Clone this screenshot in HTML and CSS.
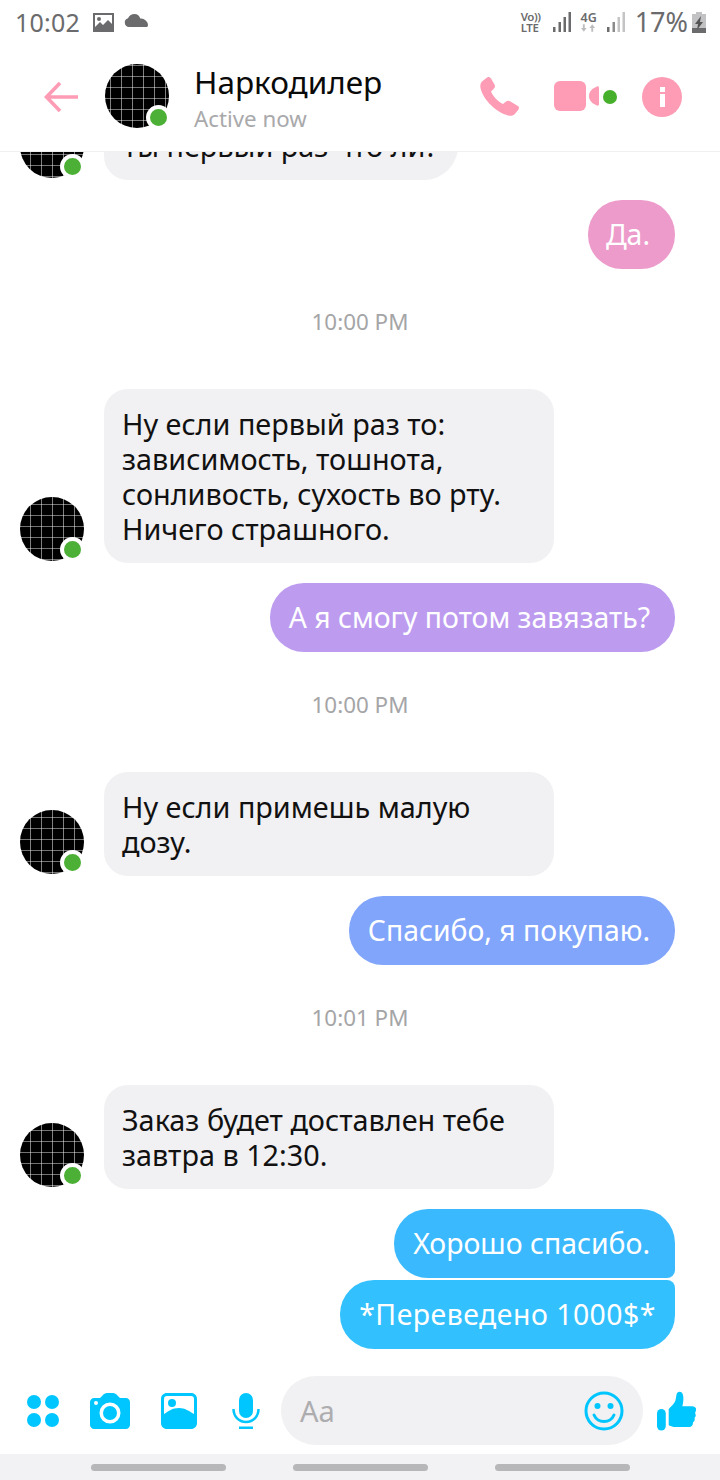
FILE: index.html
```html
<!DOCTYPE html>
<html lang="ru">
<head>
<meta charset="utf-8">
<title>Чат</title>
<link rel="stylesheet" href="styles.css">
</head>
<body>
<div class="phone">
  <header class="top">
    <div class="status">
      <div class="status-side">
        <span class="clock">10:02</span>
        <svg class="st-pic" viewBox="0 0 21 19"><path fill="#6b6b6d" fill-rule="evenodd" d="M0 0h21v19H0zM2 2v12l5-5 3 3 5-5 4 4V2zM6 4a2 2 0 1 1 0 4 2 2 0 0 1 0-4z"/></svg>
        <svg class="st-cloud" viewBox="0 0 24 13"><path fill="#6b6b6d" d="M5 13a4.500 4.500 0 0 1-1-8.800C5 1.500 8 0 10.500 0c3 0 5 2 5.800 4.500 3-.8 7.700 2.500 7.700 6.500 0 1.500-.5 2-2 2z"/></svg>
      </div>
      <div class="status-side right">
        <span class="volte">Vo))<br>LTE</span>
        <svg class="st-bars first" viewBox="0 0 18 20"><g fill="#6b6b6d"><rect x="0" y="15" width="2.500" height="5"/><rect x="5.500" y="10" width="2.500" height="10"/><rect x="10.500" y="5" width="2.500" height="15"/><rect x="15.500" y="0" width="2.500" height="20"/></g></svg>
        <span class="fourg">4G<svg class="st-arrows" viewBox="0 0 16 8"><path fill="#bdbdbf" d="M3 8 0 4h2V0h2v4h2zM12 0l3 4h-2v4h-2V4H9z"/></svg></span>
        <svg class="st-bars" viewBox="0 0 18 20"><rect fill="#6b6b6d" x="0" y="15" width="2.500" height="5"/><rect fill="#8b8b8d" x="5.500" y="10" width="2.500" height="10"/><rect fill="#c4c4c6" x="10.500" y="5" width="2.500" height="15"/><rect fill="#c4c4c6" x="15.500" y="0" width="2.500" height="20"/></svg>
        <span class="pct">17%</span>
        <svg class="st-batt" viewBox="0 0 14 21"><path fill="#c2c2c4" d="M4 0h6v2h4v19H0V2h4z"/><path fill="#6b6b6d" d="M0 16h14v5H0z"/><path fill="#555" d="M9 4 3 12h3l-1 6 6-8H8z"/></svg>
      </div>
    </div>
    <div class="bar">
      <svg class="back" viewBox="0 0 34 32"><path fill="none" stroke="#fd9cb4" stroke-width="3.600" d="M34 16H3M16 2 2.500 16 16 30"/></svg>
      <div class="avatar big"><span class="dot"></span></div>
      <div class="who">
        <div class="name">Наркодилер</div>
        <div class="active">Active now</div>
      </div>
      <div class="actions">
        <svg class="phone-ic" viewBox="0 0 40 39"><path fill="#fd9cb4" d="M2 4.500 7 .5c1.500-1 3-.5 4 1l3.500 6c.8 1.500.6 3-.5 4l-3 3c2 5 7 10 12 12.500l3-2.500c1.200-1 2.800-1.200 4-.3l7.500 4.500c1.600 1 2 2.500.8 4l-3.300 4c-1.500 1.700-3.500 2.500-6 2C17 36 3 23 .5 11 0 8.500.5 6 2 4.500z"/></svg>
        <div class="video">
          <svg class="video-ic" viewBox="0 0 46 31"><rect fill="#fd9cb4" x="0" y="0" width="32" height="30" rx="6"/><path fill="#fd9cb4" d="M45 7v16c0 1.500-1 2-2 1.500-4-1.500-8-4.500-8-9.500s4-8 8-9.500c1-.5 2 0 2 1.500z"/></svg>
          <span class="video-dot"></span>
        </div>
        <div class="info"><span class="info-dot"></span><span class="info-stem"></span></div>
      </div>
    </div>
  </header>

  <main class="feed">
    <div class="row in">
      <div class="avatar"><span class="dot"></span></div>
      <div class="bubble in-b short">Ты первый раз что ли?</div>
    </div>
    <div class="row out gap-s"><div class="bubble sent b-pink">Да.</div></div>
    <div class="stamp">10:00 PM</div>
    <div class="row in">
      <div class="avatar"><span class="dot"></span></div>
      <div class="bubble in-b">Ну если первый раз то:<br>зависимость, тошнота,<br>сонливость, сухость во рту.<br>Ничего страшного.</div>
    </div>
    <div class="row out gap-s"><div class="bubble sent b-violet">А я смогу потом завязать?</div></div>
    <div class="stamp">10:00 PM</div>
    <div class="row in">
      <div class="avatar"><span class="dot"></span></div>
      <div class="bubble in-b">Ну если примешь малую<br>дозу.</div>
    </div>
    <div class="row out gap-s"><div class="bubble sent b-blue">Спасибо, я покупаю.</div></div>
    <div class="stamp">10:01 PM</div>
    <div class="row in">
      <div class="avatar"><span class="dot"></span></div>
      <div class="bubble in-b">Заказ будет доставлен тебе<br>завтра в 12:30.</div>
    </div>
    <div class="row out gap-s"><div class="bubble sent b-sky">Хорошо спасибо.</div></div>
    <div class="row out gap-xs"><div class="bubble sent b-cyan">*Переведено 1000$*</div></div>
  </main>

  <footer class="composer">
    <div class="grid-ic"><i></i><i></i><i></i><i></i></div>
    <svg class="cam" viewBox="0 0 40 36"><path fill="#00c6ff" fill-rule="evenodd" d="M4 5h6l3-3c1-1 2-2 4-2h6c2 0 3 1 4 2l3 3h6c2 0 4 2 4 4v23c0 2-2 4-4 4H4c-2 0-4-2-4-4V9c0-2 2-4 4-4zM20 9.500a10.500 10.500 0 1 0 0 21 10.500 10.500 0 0 0 0-21zM20 13a7 7 0 1 1 0 14 7 7 0 0 1 0-14zM6 8a2 2 0 1 0 0 4 2 2 0 0 0 0-4z"/></svg>
    <svg class="pic" viewBox="0 0 36 36"><path fill="#00c6ff" fill-rule="evenodd" d="M6 0h24c3.500 0 6 2.500 6 6v24c0 3.500-2.500 6-6 6H6c-3.500 0-6-2.500-6-6V6c0-3.500 2.500-6 6-6zM6 3C4 3 3 4 3 6v15c5-3 8-6 15-6 6 0 10 3 15 6V6c0-2-1-3-3-3zM11 6a4 4 0 1 1 0 8 4 4 0 0 1 0-8z"/></svg>
    <svg class="mic" viewBox="0 0 28 36"><rect fill="#00c6ff" x="7" y="0" width="14" height="25" rx="7"/><path fill="none" stroke="#00c6ff" stroke-width="2.500" d="M1.500 16c0 7 5 13 12.500 13s12.500-6 12.500-13M7 34.800h14"/></svg>
    <div class="input">
      <span class="aa">Aa</span>
      <svg class="smile" viewBox="0 0 40 40"><circle cx="20" cy="20" r="18" fill="none" stroke="#00c6ff" stroke-width="3"/><circle cx="13.500" cy="15" r="3" fill="#00c6ff"/><circle cx="26.500" cy="15" r="3" fill="#00c6ff"/><path fill="none" stroke="#00c6ff" stroke-width="3" stroke-linecap="round" d="M10 24c2 4.500 6 6.500 10 6.500s8-2 10-6.500"/></svg>
    </div>
    <svg class="like" viewBox="0 0 40 40"><rect fill="#00c6ff" x="0" y="18" width="9" height="22" rx="4.500"/><path fill="#00c6ff" d="M12 18c3-3 6-6 7-9l1-6c.5-3 5-4 6.500 0 1 3 .5 9-.5 12h10c3 0 4.500 2 4 4 0 1-.5 2-1 3 1 1.500 1 4-.5 5 .5 2 0 3.500-1.500 4.500 0 3-1.500 5-4 5H19c-3 0-4-1-7-2z"/></svg>
  </footer>
  <nav class="navbar"><span></span><span></span><span></span></nav>
</div>
</body>
</html>
```

FILE: styles.css
```css
* { box-sizing: border-box; }
html, body { margin: 0; padding: 0; background: #fff; }
body { font-family: "Noto Sans", "Open Sans", sans-serif; }
.phone { width: 720px; height: 1480px; display: flex; flex-direction: column; overflow: hidden; background: #fff; }

.top { height: 152px; flex: none; background: #fff; border-bottom: 1px solid #f0f0f1; position: relative; z-index: 2; }
.status { height: 44px; display: flex; justify-content: space-between; align-items: center; padding: 0 14px 0 15px; color: #6b6b6d; }
.status-side { display: flex; align-items: center; }
.clock { font-size: 25px; line-height: 44px; letter-spacing: .2px; }
.st-pic { width: 21px; height: 19px; margin-left: 13px; }
.st-cloud { width: 24px; height: 13px; margin-left: 10px; margin-top: -4px; }
.volte { font-size: 11.500px; line-height: 11px; font-weight: 600; width: 22px; white-space: nowrap; letter-spacing: -.4px; }
.st-bars { width: 18px; height: 20px; margin-left: 10px; }
.st-bars.first { margin-left: 10px; }
.fourg { font-size: 12.500px; line-height: 12px; font-weight: 600; width: 16px; margin-left: 10px; display: flex; flex-direction: column; align-items: center; }
.st-arrows { width: 15px; height: 8px; }
.pct { font-size: 27px; line-height: 44px; margin-left: 10px; letter-spacing: 0; }
.st-batt { width: 14px; height: 21px; margin-left: 4px; }

.bar { height: 107px; display: flex; align-items: center; padding: 0 0 2px 44px; }
.back { width: 34px; height: 32px; flex: none; }
.avatar { width: 64px; height: 64px; flex: none; border-radius: 50%; position: relative;
  background-color: #000;
  background-image: linear-gradient(rgba(255,255,255,.45) 1px, transparent 1px), linear-gradient(90deg, rgba(255,255,255,.5) 1px, transparent 1px);
  background-size: 11px 11px;
  background-position: 10px 7px;
}
.avatar.big { margin: -2px 0 0 27px; background-position: 5px 1px; }
.dot { position: absolute; right: -1px; bottom: -1px; width: 25px; height: 25px; border-radius: 50%; background: #4caf36; border: 4px solid #fff; }
.avatar.big .dot { right: -2px; bottom: -2px; }
.who { margin-left: 25px; flex: 1; padding-top: 3px; }
.name { font-size: 31.500px; line-height: 40px; color: #0a0a0a; white-space: nowrap; }
.active { font-size: 22.300px; line-height: 30px; color: #a9a9ab; margin-top: 2px; white-space: nowrap; }
.actions { display: flex; align-items: center; padding-right: 38px; }
.phone-ic { width: 40px; height: 39px; }
.video { display: flex; align-items: center; margin-left: 34px; }
.video-ic { width: 46px; height: 31px; }
.video-dot { width: 14px; height: 14px; border-radius: 50%; background: #46b02c; margin-left: 3px; }
.info { width: 40px; height: 40px; margin-left: 25px; border-radius: 50%; background: #fd9cb4; display: flex; flex-direction: column; align-items: center; justify-content: center; }
.info-dot { width: 5px; height: 5px; background: #fff; }
.info-stem { width: 5px; height: 13px; margin-top: 2px; background: #fff; }

.feed { flex: 1; min-height: 0; display: flex; flex-direction: column; justify-content: flex-end; overflow: hidden; padding: 0 45px 11px 20px; }
.row { display: flex; flex: none; align-items: flex-end; }
.row.out { justify-content: flex-end; }
.gap-s { margin-top: 20px; }
.gap-xs { margin-top: 2px; }
.row .avatar { margin-bottom: 2px; }
.bubble { font-size: 28.800px; line-height: 35px; padding: 17px 19px; border-radius: 34px; white-space: nowrap; }
.in-b { background: #f1f0f2; color: #111; width: 450px; margin-left: 20px; border-radius: 24px; padding-left: 18px; padding-right: 10px; }
.in-b.short { width: 354px; border-radius: 24px 34px 34px 24px; }
.sent { color: #fff; font-size: 28.400px; padding-right: 25px; }
.b-pink { background: #ec9bcb; padding-left: 18px; }
.b-violet { background: #bd9cf0; }
.b-blue { background: #81a5fb; }
.b-sky { background: #3ab9ff; border-bottom-right-radius: 8px; }
.b-cyan { background: #33c0fe; border-top-right-radius: 8px; letter-spacing: .5px; padding-right: 19px; }
.stamp { flex: none; text-align: center; font-size: 22.400px; line-height: 30px; color: #a5a5a7; margin: 38px -25px 52px 0; }

.composer { height: 94px; flex: none; display: flex; align-items: center; padding: 7px 0 0 27px; position: relative; }
.grid-ic { width: 32px; height: 32px; display: grid; grid-template-columns: 14px 14px; gap: 4px; flex: none; }
.grid-ic i { width: 14px; height: 14px; border-radius: 50%; background: #00c6ff; }
.cam { width: 40px; height: 36px; margin-left: 31px; flex: none; }
.pic { width: 36px; height: 36px; margin-left: 31px; flex: none; }
.mic { width: 28px; height: 36px; margin-left: 35px; flex: none; }
.input { width: 362px; height: 69px; margin-left: 21px; flex: none; background: #f1f0f2; border-radius: 35px; display: flex; align-items: center; justify-content: space-between; padding: 0 19px 0 19px; }
.aa { font-size: 29px; color: #adadaf; }
.smile { width: 40px; height: 40px; }
.like { width: 39px; height: 40px; margin-left: 14px; flex: none; }

.navbar { height: 26px; flex: none; background: #f2f1f3; display: flex; justify-content: center; gap: 67px; align-items: center; }
.navbar span { width: 135px; height: 7px; border-radius: 4px; background: #b7b6b8; }
```
